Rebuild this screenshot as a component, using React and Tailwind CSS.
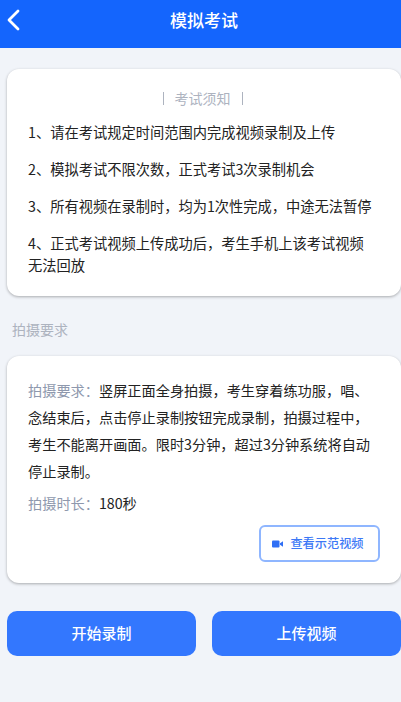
const font = { fontFamily: '"Noto Sans CJK SC", sans-serif' };

export default function App() {
  return (
    <div className="w-[401px] h-[702px] bg-[#f1f4f9] flex flex-col overflow-hidden font-['Noto_Sans_CJK_SC',sans-serif]">
      <header className="h-[48px] bg-[#1465fd] relative flex items-center justify-center shrink-0">
        <svg className="absolute left-[6px] top-[8px]" width="14" height="24" viewBox="0 0 14 24" fill="none">
          <path d="M12 3 L3 12 L12 21" stroke="white" strokeWidth="2.8" strokeLinecap="round" strokeLinejoin="round" />
        </svg>
        <h1 className="text-white text-[17px] leading-[24px] font-medium -mt-[8px] ml-[7px]">模拟考试</h1>
      </header>

      <section className="mt-[21px] mx-[7px] w-[394px] h-[227px] bg-white rounded-[12px] shadow-[0_1px_3px_rgba(0,0,0,0.3)] pl-[21px] pr-[26px] pt-[19px]">
        <div className="flex justify-center items-center gap-[11px] ml-[2px] text-[#adb3bf] text-[14px] leading-[20px]">
          <span className="w-px h-[13px] bg-[#adb3bf]" />
          <span>考试须知</span>
          <span className="w-px h-[13px] bg-[#adb3bf]" />
        </div>
        <ol className="mt-[13px] text-[#222] text-[14.25px] leading-[22px] flex flex-col gap-[15px]">
          <li>1、请在考试规定时间范围内完成视频录制及上传</li>
          <li>2、模拟考试不限次数，正式考试3次录制机会</li>
          <li>3、所有视频在录制时，均为1次性完成，中途无法暂停</li>
          <li>4、正式考试视频上传成功后，考生手机上该考试视频无法回放</li>
        </ol>
      </section>

      <h2 className="mt-[23px] ml-[12px] text-[#adb3bf] text-[14px] leading-[20px]">拍摄要求</h2>

      <section className="mt-[17px] mx-[7px] w-[394px] h-[227px] bg-white rounded-[12px] shadow-[0_1px_3px_rgba(0,0,0,0.3)] pl-[21px] pr-[26px] pt-[21px] flex flex-col">
        <p className="text-[#222] text-[14.2px] leading-[27px]">
          <span className="text-[#8e98ad]">拍摄要求：</span>竖屏正面全身拍摄，考生穿着练功服，唱、念结束后，点击停止录制按钮完成录制，拍摄过程中，考生不能离开画面。限时3分钟，超过3分钟系统将自动停止录制。
        </p>
        <p className="mt-[6px] text-[#222] text-[14.2px] leading-[24px]">
          <span className="text-[#8e98ad]">拍摄时长：</span>180秒
        </p>
        <div className="flex justify-end mt-[10px] -mr-[5px]">
          <button className="w-[121px] h-[37px] border-2 border-[#8fb6ff] rounded-[6px] bg-white flex items-center justify-center gap-[7px] pr-[3px] text-[#3c78f6] text-[12.2px] font-medium" style={font}>
            <svg width="11" height="8" viewBox="0 0 11 8"><rect x="0" y="0.5" width="7.5" height="7" rx="1" fill="#2f6ff5" /><path d="M8 3.2 L11 1.2 V6.8 L8 4.8 Z" fill="#2f6ff5" /></svg>
            查看示范视频
          </button>
        </div>
      </section>

      <div className="mt-[28px] ml-[7px] flex gap-[16px]">
        <button className="w-[189px] h-[45px] rounded-[10px] bg-[#3377fe] text-white text-[15px] font-medium">开始录制</button>
        <button className="w-[189px] h-[45px] rounded-[10px] bg-[#3377fe] text-white text-[15px] font-medium">上传视频</button>
      </div>
    </div>
  );
}
